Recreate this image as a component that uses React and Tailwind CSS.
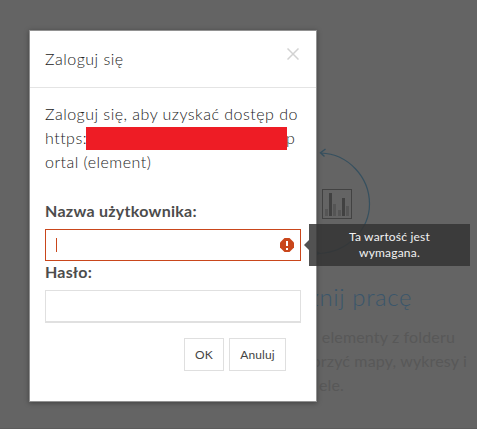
import { useState } from "react";

export default function App() {
  return (
    <div className="relative h-[429px] w-[478px] overflow-hidden bg-white font-['Lato',sans-serif]">
      <div className="h-[429px] w-[477px] overflow-hidden border-b border-[#5c5c5c] bg-[#646464]">
        <StartPanel />
      </div>
      <LoginDialog />
      <Tooltip />
    </div>
  );
}

/* Dimmed page content behind the dialog */
function StartPanel() {
  return (
    <section className="flex h-full flex-col pt-[140px]">
      <StartDrawing />
      <h2 className="w-[412px] text-right text-[24px] leading-[34px] font-light tracking-[0.6px] text-[#3a566b]">
        znij pracę
      </h2>
      <div className="mt-[11px] text-right text-[16px] leading-6 tracking-[0.15px] whitespace-nowrap text-[#585858]">
        <p className="w-[455px]">elementy z folderu</p>
        <p className="w-[467px]">orzyć mapy, wykresy i</p>
        <p className="w-[344px]">ele.</p>
      </div>
    </section>
  );
}

function StartDrawing() {
  return (
    <svg className="ml-[300px] h-[140px] w-[100px] shrink-0" viewBox="300 140 100 140" fill="none">
      <path d="M321 153C348 154 369.500 177 369.500 204C369.500 229 348 252 319 253.500" stroke="#36505f" strokeWidth="1.200" />
      <path d="M325.500 149L320.500 152.800L324.500 156.500" stroke="#36505f" strokeWidth="1.400" />
      <path d="M316 250.500L320.500 253.200L316 256Z" fill="#36505f" />
      <rect x="322.500" y="189.500" width="29" height="29" stroke="#424242" />
      <path d="M325 209h3v7h-3zM333 204h3v12h-3zM338 210h3v6h-3zM346 206h3v10h-3z" fill="#555555" />
      <path d="M329 193h3v23h-3zM342 198h3v18h-3z" fill="#414141" />
    </svg>
  );
}

function LoginDialog() {
  const [user, setUser] = useState("");
  const [password, setPassword] = useState("");

  return (
    <div
      role="dialog"
      className="absolute top-[30px] left-[29px] flex h-[372px] w-[288px] flex-col border border-[#929292] bg-white text-[16px] text-[#4c4c4c] shadow-[0_1px_5px_rgba(0,0,0,0.35)]"
    >
      <header className="flex h-[57px] shrink-0 items-start justify-between border-b border-[#e4e4e4] pr-[17px] pl-[15px]">
        <h1 className="pt-4 leading-6 font-light tracking-[0.5px] text-[#222]">Zaloguj się</h1>
        <button type="button" aria-label="Zamknij" className="mt-[17px]">
          <svg width="12" height="12" viewBox="0 0 12 12" stroke="#d2d2d2" strokeWidth="1.500">
            <path d="M0.500 0.500L11.500 11.500M11.500 0.500L0.500 11.500" />
          </svg>
        </button>
      </header>

      <form className="flex flex-col px-[15px] pt-[14px]" onSubmit={(e) => e.preventDefault()}>
        <div className="leading-6 font-light tracking-[0.48px] whitespace-nowrap text-[#222]">
          <p>Zaloguj się, aby uzyskać dostęp do</p>
          <p className="flex h-6 items-start">
            <span className="w-[41px]">https:</span>
            <span className="mt-px h-[23px] w-[201px] bg-[#ee1c25]" />
            <span className="-ml-px">p</span>
          </p>
          <p>ortal (element)</p>
        </div>

        <label htmlFor="user" className="mt-[25px] leading-6 font-bold tracking-[0.27px]">
          Nazwa użytkownika:
        </label>
        <div className="mt-[6px] flex h-8 w-[256px] items-center border border-[#c9461b] pr-[6px] pl-[10px]">
          <span className="h-[14px] w-px bg-[#c9461b]" />
          <input
            id="user"
            value={user}
            onChange={(e) => setUser(e.target.value)}
            className="min-w-0 flex-1 caret-[#c9461b] outline-none"
          />
          <svg className="h-[14px] w-[14px]" viewBox="0 0 14 14">
            <path d="M4.500 0h5L14 4.500v5L9.500 14h-5L0 9.500v-5z" fill="#c9461b" />
            <path d="M6 3h2v5H6zM6 10h2v2H6z" fill="#fff" />
          </svg>
        </div>

        <label htmlFor="password" className="-mt-px leading-6 font-bold tracking-[0.2px]">
          Hasło:
        </label>
        <input
          id="password"
          type="password"
          value={password}
          onChange={(e) => setPassword(e.target.value)}
          className="mt-[6px] h-[33px] w-[256px] border border-b-2 border-[#e0e0e0] px-2 outline-none"
        />

        <div className="mt-[15px] flex justify-end gap-[5px] pr-[15px] text-[12px] tracking-[0.1px] text-[#444]">
          <button type="submit" className="h-[33px] w-10 border border-[#dfdfdf]">
            OK
          </button>
          <button type="button" className="h-[33px] w-[57px] border border-[#dfdfdf]">
            Anuluj
          </button>
        </div>
      </form>
    </div>
  );
}

/* Validation message for the user name */
function Tooltip() {
  return (
    <div role="tooltip" className="absolute top-[224px] left-[304px] flex items-center">
      <span className="h-[10px] w-[5px] bg-[#343434]/85 [clip-path:polygon(100%_0,0_50%,100%_100%)]" />
      <div className="flex h-[42px] w-[161px] items-center justify-center bg-[#343434]/85 px-8 text-center text-[12px] leading-4 tracking-[0.2px] text-[#f2f2f2]">
        Ta wartość jest wymagana.
      </div>
    </div>
  );
}
